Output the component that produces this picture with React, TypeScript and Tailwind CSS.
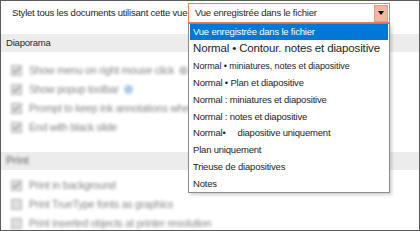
import { Check } from "lucide-react"

const font = "font-['Liberation_Sans',Arial,sans-serif]"

function Box({ checked }: { checked?: boolean }) {
  return (
    <span className="w-[11px] h-[11px] border border-[#b0b0b0] bg-[#e0e0e0] flex items-center justify-center shrink-0">
      {checked && <Check className="w-[9px] h-[9px] text-[#8a8a8a]" strokeWidth={3} />}
    </span>
  )
}

function Info({ blue }: { blue?: boolean }) {
  return (
    <span
      className={`w-[9px] h-[9px] rounded-full ml-[5px] shrink-0 ${blue ? "bg-[#a8cbee]" : "bg-[#c9c9c9]"}`}
    />
  )
}

function Row({ label, checked = true, info }: { label: string; checked?: boolean; info?: "gray" | "blue" }) {
  return (
    <div className="h-[19px] flex items-center pl-[10px] blur-[1.4px]">
      <Box checked={checked} />
      <span className="ml-[7px] text-[10.5px] text-[#858585] whitespace-nowrap">{label}</span>
      {info && <Info blue={info === "blue"} />}
    </div>
  )
}

const items = [
  { text: "Normal • Plan et diapositive" },
  { text: "Normal : miniatures et diapositive" },
  { text: "Normal : notes et diapositive" },
  { text: "split" },
  { text: "Plan uniquement" },
  { text: "Trieuse de diapositives" },
  { text: "Notes" },
]

export default function App() {
  return (
    <div className={`w-[420px] h-[231px] border border-[#5a5a5a] bg-white relative overflow-hidden ${font} text-[9.5px] tracking-[-0.2px] text-[#1e1e1e]`}>
      {/* top row */}
      <div className="h-[33px] pt-[2px] pl-[11px] flex items-start">
        <div className="flex items-center h-[20px]">
          <span className="w-[176px] whitespace-nowrap">Stylet tous les documents utilisant cette vue</span>
          <div className="w-[202px] h-[20px] border border-[#e2825f] flex items-center bg-white">
            <span className="pl-[6px] flex-1 whitespace-nowrap">Vue enregistrée dans le fichier</span>
            <span className="w-[14px] h-[17px] mr-[1px] bg-[#f5b7a0] border border-[#e99a7e] flex items-center justify-center">
              <span className="w-0 h-0 border-l-[3.5px] border-r-[3.5px] border-t-[4px] border-l-transparent border-r-transparent border-t-black" />
            </span>
          </div>
        </div>
      </div>

      {/* Diaporama section */}
      <div className="h-[18px] bg-[#ececec] flex items-center pl-[5px] text-[#2a2a2a]">Diaporama</div>
      <div className="pt-[9px] pb-[15px]">
        <Row label="Show menu on right mouse click" info="gray" />
        <Row label="Show popup toolbar" info="blue" />
        <Row label="Prompt to keep ink annotations when exiting" />
        <Row label="End with black slide" />
      </div>

      {/* Print section */}
      <div className="h-[18px] bg-[#ececec] flex items-center pl-[5px]">
        <span className="blur-[1.4px] text-[10.5px] font-bold text-[#8a8a8a]">Print</span>
      </div>
      <div className="pt-[6px]">
        <Row label="Print in background" />
        <Row label="Print TrueType fonts as graphics" checked={false} />
        <Row label="Print inserted objects at printer resolution" checked={false} />
      </div>

      {/* open dropdown list */}
      <div className="absolute left-[187px] top-[22px] w-[202px] border border-[#8c8c8c] bg-white shadow-[2px_2px_3px_rgba(0,0,0,0.18)]">
        <div className="h-[16px] mx-[1px] bg-[#0078d7] text-white flex items-center pl-[3px] whitespace-nowrap">
          Vue enregistrée dans le fichier
        </div>
        <div className="h-[18px] flex items-center pl-[4px] text-[11.5px] tracking-[-0.15px] whitespace-nowrap">
          Normal • Contour. notes et diapositive
        </div>
        <div className="h-[16.75px] flex items-center pl-[4px] text-[9px] tracking-[-0.1px] whitespace-nowrap">
          Normal • miniatures, notes et diapositive
        </div>
        {items.map((it) =>
          it.text === "split" ? (
            <div key="split" className="h-[16.75px] flex items-center pl-[4px] whitespace-nowrap">
              <span>Normal•</span>
              <span className="ml-[12px]">diapositive uniquement</span>
            </div>
          ) : (
            <div key={it.text} className="h-[16.75px] flex items-center pl-[4px] whitespace-nowrap">
              {it.text}
            </div>
          )
        )}
      </div>
    </div>
  )
}
